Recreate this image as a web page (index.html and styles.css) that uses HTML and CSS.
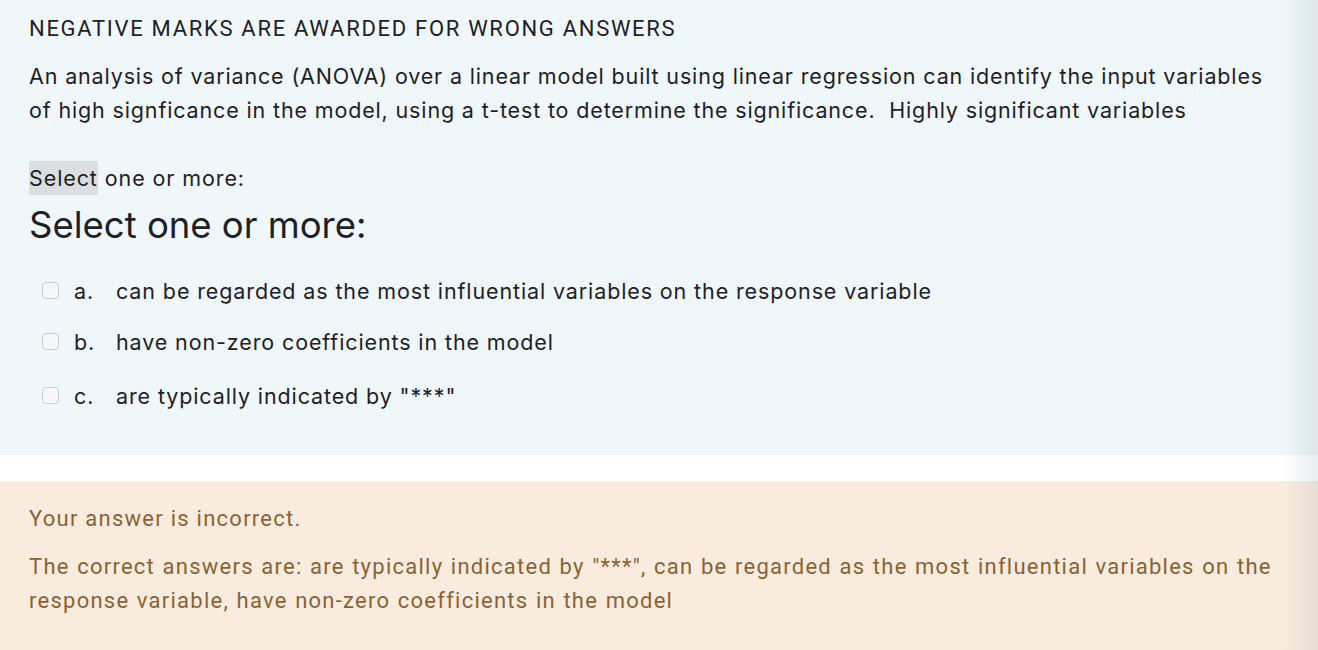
FILE: index.html
```html
<!DOCTYPE html>
<html>
<head>
<meta charset="utf-8">
<link rel="stylesheet" href="styles.css">
</head>
<body>
<div class="page">
  <section class="question">
    <p class="notice">NEGATIVE MARKS ARE AWARDED FOR WRONG ANSWERS</p>
    <p class="qtext">An analysis of variance (ANOVA) over a linear model built using linear regression can identify the input variables of high signficance in the model, using a t-test to determine the significance.&nbsp; Highly significant variables</p>
    <p class="prompt"><span class="hl">Select</span> one or more:</p>
    <h2 class="prompt-big">Select one or more:</h2>
    <div class="answers">
      <label class="opt opt-a"><span class="box"></span><span class="letter">a.</span><span class="otext">can be regarded as the most influential variables on the response variable</span></label>
      <label class="opt opt-b"><span class="box"></span><span class="letter">b.</span><span class="otext">have non-zero coefficients in the model</span></label>
      <label class="opt opt-c"><span class="box"></span><span class="letter">c.</span><span class="otext">are typically indicated by "***"</span></label>
    </div>
  </section>
  <section class="feedback">
    <p class="fb1">Your answer is incorrect.</p>
    <p class="fb2">The correct answers are: are typically indicated by "***", can be regarded as the most influential variables on the response variable, have non-zero coefficients in the model</p>
  </section>
  <div class="edge"></div>
</div>
</body>
</html>
```
FILE: styles.css
```css
* { box-sizing: border-box; }
html, body { margin: 0; padding: 0; background: #ffffff; }
body { width: 1318px; height: 650px; overflow: hidden; }
.page { position: relative; height: 650px; }
p, h2 { margin: 0; }

.question {
  background: #eff7fb;
  padding: 12px 40px 0 29px;
  height: 455px;
  color: #1d2125;
}
.notice {
  font-family: Roboto, sans-serif;
  font-size: 22px;
  letter-spacing: 1.7px;
  line-height: 34px;
}
.qtext {
  margin-top: 13px;
  font-family: Inter, sans-serif;
  font-size: 21.5px;
  letter-spacing: 0.85px;
  line-height: 34px;
}
.prompt {
  margin-top: 34px;
  font-family: Inter, sans-serif;
  font-size: 21.5px;
  letter-spacing: 0.9px;
  line-height: 34px;
}
.hl { background: #dcdfe1; display: inline-block; }
.prompt-big {
  font-family: Inter, sans-serif;
  font-weight: 400;
  font-size: 36.5px;
  line-height: 60px;
  margin-top: 0;
}
.answers { display: flex; flex-direction: column; margin-top: 10px; }
.opt {
  display: flex;
  align-items: center;
  height: 51px;
  font-family: Inter, sans-serif;
  font-size: 21.5px;
  letter-spacing: 0.88px;
}
.opt-c { margin-top: 3px; }
.box {
  width: 17px; height: 17px;
  margin-left: 13px;
  border: 1px solid #c9cdd0;
  border-radius: 4px;
  background: #f6f7f8;
}
.letter { margin-left: 15px; width: 42px; }

.feedback {
  margin-top: 26px;
  background: #f9ecde;
  padding: 21px 29px 30px;
  height: 169px;
  color: #8a6234;
  font-family: Roboto, sans-serif;
  font-size: 22px;
  letter-spacing: 1.25px;
}
.fb1 { line-height: 34px; }
.fb2 { margin-top: 14px; line-height: 34px; word-spacing: 0.8px; }

.edge {
  position: absolute;
  top: 0; right: 0; bottom: 0;
  width: 36px;
  background: linear-gradient(to right, rgba(180,190,200,0), rgba(150,160,170,0.2));
  pointer-events: none;
}
```
